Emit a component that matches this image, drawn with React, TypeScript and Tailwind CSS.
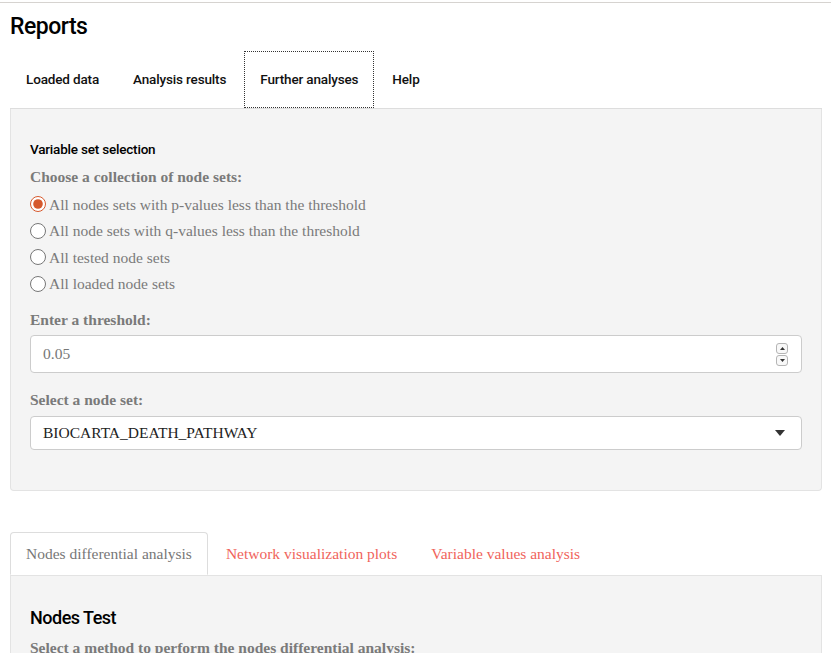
import React, { useState } from 'react';

const headFont = { fontFamily: 'Roboto, "Liberation Sans", sans-serif' };

const OPTIONS = [
  'All nodes sets with p-values less than the threshold',
  'All node sets with q-values less than the threshold',
  'All tested node sets',
  'All loaded node sets',
];

const TOP_TABS = ['Loaded data', 'Analysis results', 'Further analyses', 'Help'];
const SUB_TABS = ['Nodes differential analysis', 'Network visualization plots', 'Variable values analysis'];

export default function App() {
  const [choice, setChoice] = useState(0);

  return (
    <div className="min-h-[653px] bg-white pt-[2px] font-['Liberation_Serif',serif] text-[15.5px]">
      <div className="border-t border-[#d6d3d0] pl-[10px] pr-[9px]">
        <h1 className="mt-[9px] h-[30px] text-[23px] font-medium leading-[30px] tracking-[-0.5px] text-black" style={headFont}>
          Reports
        </h1>

        {/* top level tabs */}
        <div className="mt-[9px] flex h-[58px] border-b border-[#dddddd]" style={headFont}>
          {TOP_TABS.map((tab) => (
            <div
              key={tab}
              className={`mr-[2px] flex items-center px-[15px] text-[13.5px] font-medium tracking-[-0.15px] text-[#111] ${
                tab === 'Further analyses' ? 'border border-dotted border-[#333]' : 'border border-transparent'
              }`}
            >
              {tab}
            </div>
          ))}
        </div>

        {/* variable set well */}
        <div className="rounded-b-[4px] border-x border-b border-[#e3e3e3] bg-[#f4f4f4] px-[19px] pt-[30px] pb-[40px]">
          <h4 className="h-[20px] text-[13.5px] font-medium leading-[20px] tracking-[-0.2px] text-black" style={headFont}>
            Variable set selection
          </h4>
          <div className="mt-[8px] h-[20px] font-bold leading-[20px] text-[#7a7a7a]">Choose a collection of node sets:</div>
          <div className="mt-[4px]">
            {OPTIONS.map((opt, i) => (
              <label key={opt} className="flex h-[26.5px] items-center text-[#7a7a7a]">
                <input
                  type="radio"
                  name="collection"
                  checked={choice === i}
                  onChange={() => setChoice(i)}
                  className="m-0 mr-[3px] h-[16px] w-[16px] accent-[#d5582c]"
                />
                {opt}
              </label>
            ))}
          </div>

          <div className="mt-[13px] h-[20px] font-bold leading-[20px] text-[#7a7a7a]">Enter a threshold:</div>
          <div className="mt-[5px] flex h-[38px] items-center justify-between rounded-[4px] border border-[#cccccc] bg-white pl-[12px] pr-[13px] text-[#777]">
            <span>0.05</span>
            <div className="flex flex-col gap-[1px]">
              <span className="flex h-[11px] w-[12px] items-center justify-center rounded-[3px] border border-[#b5b5b5] bg-[#f8f8f8]">
                <svg width="5" height="3" viewBox="0 0 5 3"><path d="M0 3 L2.5 0 L5 3 Z" fill="#333" /></svg>
              </span>
              <span className="flex h-[11px] w-[12px] items-center justify-center rounded-[3px] border border-[#b5b5b5] bg-[#f8f8f8]">
                <svg width="5" height="3" viewBox="0 0 5 3"><path d="M0 0 L2.5 3 L5 0 Z" fill="#333" /></svg>
              </span>
            </div>
          </div>

          <div className="mt-[17px] h-[20px] font-bold leading-[20px] text-[#7a7a7a]">Select a node set:</div>
          <div className="mt-[6px] flex h-[34px] items-center justify-between rounded-[4px] border border-[#cccccc] bg-white pl-[12px] pr-[16px] text-[#222]">
            <span>BIOCARTA_DEATH_PATHWAY</span>
            <svg width="10" height="6" viewBox="0 0 10 6"><path d="M0 0 L10 0 L5 6 Z" fill="#333" /></svg>
          </div>
        </div>

        {/* sub tabs */}
        <div className="mt-[41px] flex h-[43px]">
          {SUB_TABS.map((tab, i) => (
            <div
              key={tab}
              className={`mr-[2px] flex items-center rounded-t-[4px] border px-[15px] ${
                i === 0 ? 'border-[#dddddd] border-b-transparent bg-white text-[#777]' : 'border-transparent text-[#f0645c]'
              }`}
            >
              {tab}
            </div>
          ))}
        </div>

        <div className="h-[80px] border-x border-t border-[#e3e3e3] bg-[#f4f4f4] px-[19px] pt-[30px]">
          <h3 className="h-[24px] text-[18px] font-medium leading-[24px] tracking-[-0.5px] text-black" style={headFont}>
            Nodes Test
          </h3>
          <div className="mt-[8px] h-[20px] font-bold leading-[20px] text-[#7a7a7a]">
            Select a method to perform the nodes differential analysis:
          </div>
        </div>
      </div>
    </div>
  );
}
